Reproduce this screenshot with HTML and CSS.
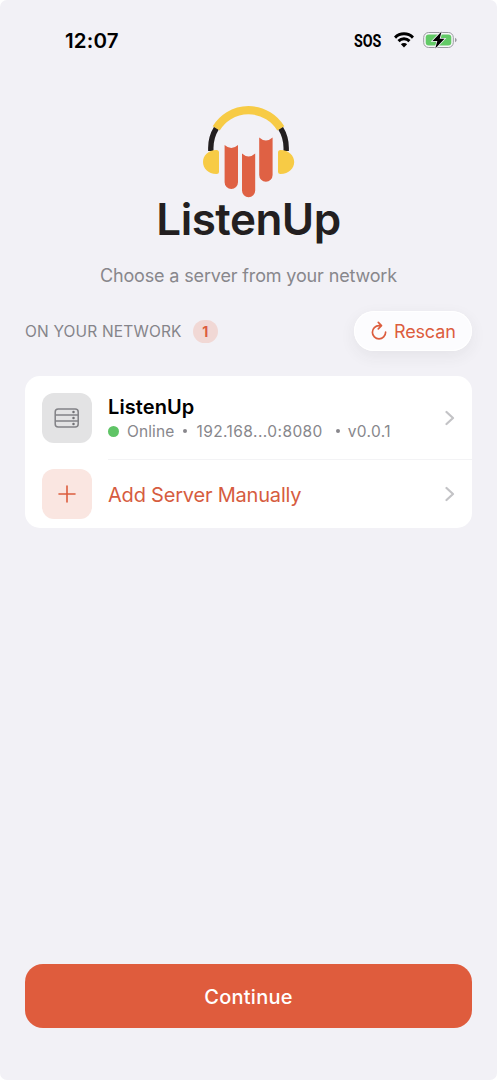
FILE: index.html
```html
<!DOCTYPE html>
<html lang="en">
<head>
<meta charset="utf-8">
<title>ListenUp</title>
<link rel="stylesheet" href="styles.css">
</head>
<body>
<main class="screen">
  <header class="status">
    <span class="time">12:07</span>
    <div class="indicators">
      <span class="sos">SOS</span>
      <svg class="wifi" width="20" height="16" viewBox="0 0 20 16" fill="none" stroke="#000" stroke-width="3"><path d="M1 5.6a12.7 12.7 0 0 1 18 0M4.5 9.1a7.8 7.8 0 0 1 11 0"/><path d="M10 15.4 6.9 12.2a4.4 4.4 0 0 1 6.2 0Z" fill="#000" stroke="none"/></svg>
      <svg class="battery" width="34" height="20" viewBox="0 0 34 20"><rect x=".7" y="2.5" width="29.6" height="15" rx="5" fill="#f7f7f9" stroke="#999a9f"/><rect x="2.7" y="4.5" width="25.6" height="11" rx="3" fill="#62ca66"/><path d="M32 7.8q1.7.8 1.7 2.2T32 12.2Z" fill="#999a9f"/><path d="M18.6 1.6 9.5 11h4.8l-2 7.4 9.2-9.6h-4.8Z" fill="#000" stroke="#f2f1f6" stroke-width="1.6" paint-order="stroke"/></svg>
    </div>
  </header>

  <section class="brand">
    <svg class="logo" width="92" height="92" viewBox="203 106 92 92">
      <path d="M210.800 151V148A37.700 37.700 0 0 1 216.500 128M286.200 151V148A37.700 37.700 0 0 0 280.500 128" fill="none" stroke="#231f20" stroke-width="5.4"/>
      <path d="M216.200 128.400A37.700 37.700 0 0 1 280.800 128.400" fill="none" stroke="#f7cb45" stroke-width="8.2"/>
      <path d="M219 152.500V171.500Q219 174 216.500 174C208 174 203 168 203 162S208 150 216.500 150Q219 150 219 152.500ZM278 152.500V171.500Q278 174 280.500 174C289 174 294.200 168 294.200 162S289 150 280.500 150Q278 150 278 152.500Z" fill="#f7cb45"/>
      <path d="M224.600 145Q231.300 151 238 145V182.300A6.700 6.700 0 0 1 224.600 182.300ZM242 153.500Q248.600 159.500 255.200 153.500V190.600A6.600 6.600 0 0 1 242 190.600ZM259.200 137.500Q265.900 143.500 272.600 137.500V175A6.700 6.700 0 0 1 259.200 175Z" fill="#df6144"/>
    </svg>
    <h1 class="wordmark">ListenUp</h1>
    <p class="subtitle">Choose a server from your network</p>
  </section>

  <section class="network">
    <div class="network-head">
      <h2 class="label">ON YOUR NETWORK</h2>
      <span class="count">1</span>
      <button class="rescan">
        <svg width="18" height="20" viewBox="0 0 18 20" fill="none" stroke="#dc5d3e" stroke-width="1.7" stroke-linecap="round" stroke-linejoin="round"><path d="M10.800 4.600H9A6.600 6.600 0 1 0 15.600 11.200M8.300 1.400 11.500 4.600 8.300 7.800"/></svg>
        <span class="rescan-text">Rescan</span>
      </button>
    </div>

    <div class="card">
      <div class="row">
        <div class="tile tile-server">
          <svg width="26" height="20" viewBox="0 0 26 20" fill="none" stroke="#828286" stroke-width="1.500"><rect x="1.200" y="1" width="23" height="18" rx="3"/><path d="M1.200 7h23M1.200 13h23"/><g fill="#707074" stroke="none"><circle cx="19.500" cy="4.100" r="1.250"/><circle cx="19.500" cy="10" r="1.250"/><circle cx="19.500" cy="15.900" r="1.250"/></g></svg>
        </div>
        <div class="info">
          <div class="name">ListenUp</div>
          <div class="meta"><i class="online-dot"></i><span class="state">Online</span><i class="sep"></i><span class="address">192.168...0:8080</span><i class="sep sep-wide"></i><span class="version">v0.0.1</span></div>
        </div>
        <svg class="chevron" width="10" height="16" viewBox="0 0 10 16"><path d="m1.500 2 6.500 6-6.500 6"/></svg>
      </div>
      <div class="row row-add">
        <div class="tile tile-add">
          <svg width="18" height="18" viewBox="0 0 18 18"><path d="M9 1v16M1 9h16" stroke="#dc5d3e" stroke-width="1.600" stroke-linecap="round"/></svg>
        </div>
        <div class="add-text">Add Server Manually</div>
        <svg class="chevron" width="10" height="16" viewBox="0 0 10 16"><path d="m1.500 2 6.500 6-6.500 6"/></svg>
      </div>
    </div>
  </section>

  <button class="continue">Continue</button>
</main>
</body>
</html>
```
FILE: styles.css
```css
* { box-sizing: border-box; }
html { background: #fff; }
body { margin: 0; font-family: Inter, "Liberation Sans", sans-serif; }
h1, h2, p { margin: 0; font-weight: 400; }
button { border: 0; font: inherit; }
svg { display: block; flex: none; }
.screen { width: 497px; height: 1080px; background: #f2f1f6; border-radius: 7px; overflow: hidden; display: flex; flex-direction: column; white-space: nowrap; }
.status { height: 80px; padding: 0 40px 0 65px; display: flex; align-items: center; justify-content: space-between; }
.time { font-size: 20.5px; font-weight: 600; letter-spacing: .15px; padding-top: 1px; }
.indicators { display: flex; align-items: center; }
.sos { font-family: Roboto, sans-serif; font-size: 19px; font-weight: 700; width: 28px; margin-right: 12px; transform: scaleX(.75); transform-origin: left; }
.wifi { margin-right: 9px; }
.brand { height: 231px; padding-top: 26px; display: flex; flex-direction: column; align-items: center; }
.wordmark { font-weight: 600; font-size: 44px; line-height: 54px; letter-spacing: -.5px; color: #231f20; margin-top: -6px; }
.subtitle { font-size: 18px; line-height: 24px; letter-spacing: -.15px; color: #88878c; margin-top: 18px; }
.network { padding: 0 25px; }
.network-head { height: 40px; display: flex; align-items: center; }
.label { font-size: 15.500px; letter-spacing: .17px; color: #85848a; }
.count { width: 25px; height: 23px; border-radius: 12px; background: #f1d8d5; color: #dc5d3e; font-size: 14px; font-weight: 700; display: flex; align-items: center; justify-content: center; margin-left: 11px; }
.rescan { margin-left: auto; width: 118px; height: 40px; border-radius: 20px; background: #fcfcfe; color: #dc5d3e; box-shadow: 0 5px 16px rgba(50,50,60,.07), inset 0 0 0 1px #fff; display: flex; align-items: center; padding: 0 0 0 16px; gap: 6px; }
.rescan-text { font-size: 18px; letter-spacing: -.15px; }
.card { margin-top: 25px; height: 152px; background: #fff; border-radius: 15px; }
.row { height: 83px; padding: 0 17px; display: flex; align-items: center; }
.row-add { height: 69px; background: linear-gradient(#f3f3f5, #f3f3f5) 83px 0 / 364px 1px no-repeat; }
.tile { width: 50px; height: 50px; flex: none; border-radius: 12px; display: flex; align-items: center; justify-content: center; margin-right: 16px; }
.tile-server { background: #e3e3e4; }
.tile-add { background: #fae6e1; }
.info { flex: 1; padding-top: 3px; }
.name { font-size: 20px; line-height: 24px; font-weight: 600; letter-spacing: .1px; color: #000; }
.meta { display: flex; align-items: center; font-size: 15.500px; line-height: 25px; color: #88878c; }
.online-dot { width: 11px; height: 11px; border-radius: 50%; background: #5fc466; margin-right: 8px; }
.state { letter-spacing: .12px; }
.address { letter-spacing: .42px; }
.version { letter-spacing: .35px; }
.sep { width: 4px; height: 4px; border-radius: 50%; background: #88878c; margin: 0 9px; }
.sep-wide { margin: 0 8px 0 13px; }
.add-text { flex: 1; font-size: 20px; letter-spacing: -.2px; padding-top: 2px; color: #d65c40; }
.chevron path { fill: none; stroke: #c3c3c6; stroke-width: 2.200; stroke-linecap: round; stroke-linejoin: round; }
.continue { margin: auto 25px 52px; height: 64px; border-radius: 18px; background: #df5c3d; color: #fff; font-size: 20px; font-weight: 500; letter-spacing: .25px; padding: 2px 0 0; }
```
